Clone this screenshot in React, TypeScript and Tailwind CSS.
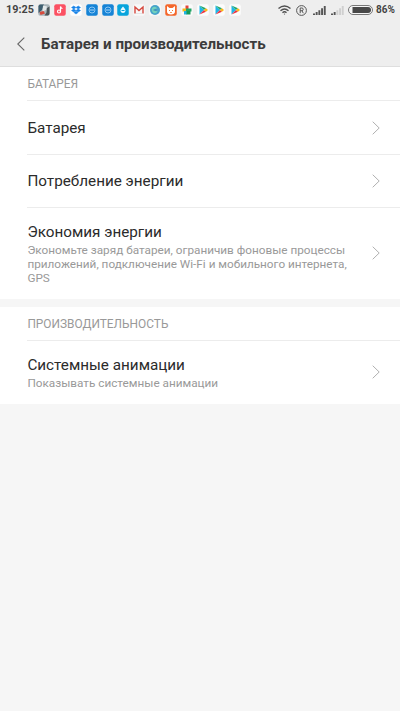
import React from 'react';

interface Item {
    title: string;
    lines?: string[];
    height: string;
}

interface Section {
    name: string;
    items: Item[];
}

const sections: Section[] = [
    {
        name: 'БАТАРЕЯ',
        items: [
            { title: 'Батарея', height: 'h-[54px]' },
            { title: 'Потребление энергии', height: 'h-[53px]' },
            {
                title: 'Экономия энергии',
                lines: ['Экономьте заряд батареи, ограничив фоновые процессы', 'приложений, подключение Wi-Fi и мобильного интернета,', 'GPS'],
                height: 'h-[92px]',
            },
        ],
    },
    {
        name: 'ПРОИЗВОДИТЕЛЬНОСТЬ',
        items: [{ title: 'Системные анимации', lines: ['Показывать системные анимации'], height: 'h-[64px]' }],
    },
];

function Tile({ fill, children }: { fill: string; children?: React.ReactNode }) {
    return (
        <svg className="w-3 h-3 shrink-0" viewBox="0 0 24 24">
            <rect x="0.5" y="0.5" width="23" height="23" rx="4" fill={fill} />
            {children}
        </svg>
    );
}

function PlayTile() {
    return (
        <Tile fill="#fcfcfc">
            <path d="M5 3v18l9-9z" fill="#1fb6e8" />
            <path d="M5 3l9 9 4-3.500z" fill="#22a86c" />
            <path d="M5 21l9-9 4 3.500z" fill="#ee3140" />
            <path d="M18 8.500L14 12l4 3.500 4-3.500z" fill="#f9b81c" />
        </Tile>
    );
}

function ChatTile() {
    return (
        <Tile fill="#1583d6">
            <circle cx="12" cy="12" r="6" fill="none" stroke="#8cc6f2" strokeWidth="2" />
            <path d="M8 12h8" stroke="#8cc6f2" strokeWidth="2.5" />
        </Tile>
    );
}

function AppIcons() {
    return (
        <div className="flex gap-[3.9px] ml-[5px]">
            <Tile fill="#a9b5ba">
                <path d="M1 5q0-4 4-4h7L8 12l-7 6z" fill="#3f5f70" />
                <path d="M10 3l8 2-2 7-7 3z" fill="#e4e9ea" />
                <path d="M3 16l8-2 3 5-9 3z" fill="#d84a3c" />
                <path d="M18 8l5-3v14q0 4-4 4h-6l4-6z" fill="#4b5558" />
            </Tile>
            <Tile fill="#fb5062">
                <circle cx="10" cy="15" r="3" fill="none" stroke="#fff" strokeWidth="2.4" />
                <path d="M13 15V5q1 4 4 4" fill="none" stroke="#fff" strokeWidth="2.4" />
            </Tile>
            <Tile fill="#fdfdfd">
                <path d="M7.500 4L12 7l-4.500 3L3 7zM16.500 4L21 7l-4.500 3L12 7zM7.500 10l4.500 3-4.500 3L3 13zM16.500 10l4.500 3-4.500 3-4.500-3zM12 14.500l4 2.700-4 2.800-4-2.800z" fill="#1682e8" stroke="#1682e8" strokeWidth="1" />
            </Tile>
            <ChatTile />
            <ChatTile />
            <Tile fill="#08a4dc">
                <path d="M12 5q6 6 5 9-1 4-5 4t-5-4q-1-3 5-9z" fill="#e5f8ff" />
                <path d="M9 13h6" stroke="#08a4dc" strokeWidth="2" />
            </Tile>
            <Tile fill="#f8f8f8">
                <path d="M4 19V6l8 7 8-7v13" fill="none" stroke="#d6483e" strokeWidth="2.8" />
                <path d="M6 19h12" stroke="#dedede" strokeWidth="1.5" />
            </Tile>
            <Tile fill="#f8f8f8">
                <circle cx="12" cy="12" r="10" fill="#46a3ca" />
                <path d="M6 8q6-5 11 1-5-1-7 3 3 4 8 1-3 7-9 5-5-4-3-10z" fill="#72d2bd" />
                <path d="M9 12h6" stroke="#3a83b5" strokeWidth="2" />
            </Tile>
            <Tile fill="#f4662a">
                <path d="M4 4l5 4h6l5-4v11q0 6-8 6t-8-6z" fill="#fff" />
                <path d="M8 13h2M14 13h2" stroke="#f4762e" strokeWidth="2" />
                <path d="M10 17h4" stroke="#f4762e" strokeWidth="1.5" />
            </Tile>
            <Tile fill="#fafafa">
                <path d="M9 3h6v7H9z" fill="#e5453a" />
                <path d="M3 9h8v6H3z" fill="#f6b919" />
                <path d="M10 9h11v6H10z" fill="#20a464" />
                <path d="M6 14h6v7H6z" fill="#20b4e0" />
                <path d="M11 14h8v7h-8z" fill="#159957" />
            </Tile>
            <PlayTile />
            <PlayTile />
            <PlayTile />
        </div>
    );
}

function Signal({ faded }: { faded?: boolean }) {
    const weak = faded ? '#cfcfcf' : '#555';
    return (
        <svg className="w-[13px] h-[9px]" viewBox="0 0 13 9">
            <path d="M0 9V7.500h2V9zM2.700 9V6h1.900v3z" fill="#555" />
            <path d="M5.400 9V4.200h1.900V9zM8.100 9V2.200H10V9zM10.800 9V0h1.900v9z" fill={weak} />
        </svg>
    );
}

function StatusBar() {
    return (
        <div className="h-5 flex items-center pl-1.5 pr-[5px] text-[11px] text-[#444] font-bold">
            <span className="w-[27px] whitespace-nowrap text-[10.8px]">19:25</span>
            <AppIcons />
            <div className="ml-auto flex items-center">
                <svg className="w-[13px] h-[10px] mr-[5px]" viewBox="0 0 13 10" fill="none" stroke="#505050" strokeWidth="1.4">
                    <path d="M.5 3.500q6-5 12 0M2.500 5.700q4-3.400 8 0M4.500 7.700q2-1.700 4 0" />
                    <circle cx="6.5" cy="9" r=".6" fill="#505050" stroke="none" />
                </svg>
                <svg className="w-[11px] h-[11px] mr-[6px]" viewBox="0 0 11 11" fill="none" stroke="#555">
                    <circle cx="5.5" cy="5.5" r="4.9" />
                    <path d="M4.200 8.200V3h1.700q1.300 0 1.300 1.300T5.900 5.700H4.200M5.900 5.700l1.400 2.500" />
                </svg>
                <Signal />
                <div className="w-[5px]" />
                <Signal faded />
                <svg className="w-[25px] h-[10px] ml-[4px] mr-[3px]" viewBox="0 0 25 10">
                    <rect x=".5" y=".5" width="24" height="9" rx="4.5" fill="#f5f5f5" stroke="#777" />
                    <path d="M4.500 2H20a3 3 0 010 6H4.500z" fill="#484848" />
                </svg>
                <span className="w-[19px] text-[10px] leading-none">86%</span>
            </div>
        </div>
    );
}

function Chevron() {
    return (
        <svg className="w-2 h-[14px] mr-5 shrink-0" viewBox="0 0 8 14" fill="none" stroke="#b0b0b0" strokeWidth="1">
            <path d="M.7.700L7.200 7 .7 13.300" />
        </svg>
    );
}

export default function App() {
    return (
        <div className="w-[400px] h-[711px] overflow-hidden bg-[#f6f6f6] font-['Roboto',sans-serif]">
            <header className="h-[67px] bg-[#eee] border-b border-[#dedede]">
                <StatusBar />
                <div className="h-12 flex items-center pl-[17px]">
                    <svg className="w-2 h-[14px] mr-4" viewBox="0 0 8 14" fill="none" stroke="#666" strokeWidth="1.1">
                        <path d="M7.300.700L.8 7l6.500 6.300" />
                    </svg>
                    <h1 className="text-[15.15px] font-bold text-[#3c3c3c] whitespace-nowrap">Батарея и производительность</h1>
                </div>
            </header>

            <main className="flex flex-col gap-2">
                {sections.map((section) => (
                    <section key={section.name} className="bg-white pl-[27.4px]">
                        <h2 className="h-[33px] flex items-center pt-[3px] text-[11.9px] text-[#999]">{section.name}</h2>
                        {section.items.map((item) => (
                            <div key={item.title} className={`${item.height} flex items-center justify-between border-t border-[#ececec]`}>
                                <div className="whitespace-nowrap">
                                    <div className="text-[15.25px] leading-[20px] text-[#2b2b2b]">{item.title}</div>
                                    {item.lines && (
                                        <div className="pt-px text-[11.75px] leading-[14.2px] text-[#999]">
                                            {item.lines.map((line) => (
                                                <div key={line}>{line}</div>
                                            ))}
                                        </div>
                                    )}
                                </div>
                                <div className={item.lines ? 'pb-0.5' : ''}>
                                    <Chevron />
                                </div>
                            </div>
                        ))}
                    </section>
                ))}
            </main>
        </div>
    );
}
